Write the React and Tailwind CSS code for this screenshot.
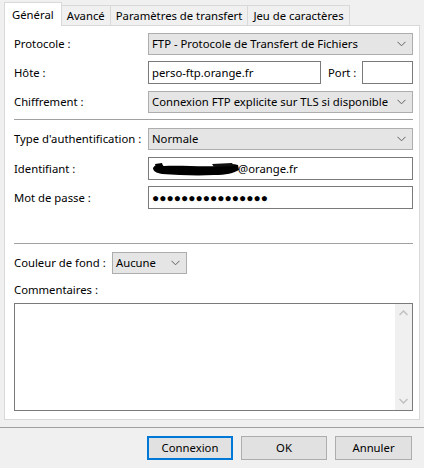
import React from 'react';

const font = { fontFamily: '"Noto Sans", "Open Sans", sans-serif' };

const Chevron = () => (
  <svg width="9" height="6" viewBox="0 0 9 6" className="shrink-0">
    <path d="M0.5 0.8 L4.5 4.8 L8.5 0.8" fill="none" stroke="#606060" strokeWidth="1" />
  </svg>
);

const Select = ({ value, className = '' }) => (
  <div className={`flex items-center justify-between bg-[#e5e5e5] border border-[#adadad] pl-[3px] pr-[6px] ${className}`}>
    <span className="text-black">{value}</span>
    <Chevron />
  </div>
);

const Input = ({ children, className = '' }) => (
  <div className={`flex items-center bg-white border border-[#7a7a7a] pl-[3px] ${className}`}>{children}</div>
);

const Row = ({ label, children, className = '' }) => (
  <div className={`flex items-center ${className}`}>
    <div className="w-[134px] shrink-0">{label}</div>
    <div className="flex-1 flex items-center">{children}</div>
  </div>
);

const tabs = ['Avancé', 'Paramètres de transfert', 'Jeu de caractères'];

export default function App() {
  return (
    <div className="w-[424px] h-[468px] bg-[#f0f0f0] text-[11.3px] text-black relative overflow-hidden leading-none whitespace-nowrap" style={font}>
      {/* tabs */}
      <div className="flex items-end pl-[4px] pt-[2px] h-[26px] relative z-10">
        <div className="h-[24px] px-[7px] flex items-center bg-white border border-b-0 border-[#d9d9d9]">Général</div>
        {tabs.map(t => (
          <div key={t} className="h-[20px] px-[5px] mb-[1px] flex items-center bg-[#f0f0f0] border border-b-0 border-l-0 border-[#d9d9d9]">{t}</div>
        ))}
      </div>

      {/* panel */}
      <div className="mx-[4px] -mt-[1px] h-[395px] bg-white border border-[#d9d9d9] pl-[9px] pr-[6px] flex flex-col">
        <Row label="Protocole :" className="mt-[7px]">
          <Select value="FTP - Protocole de Transfert de Fichiers" className="w-full h-[22px]" />
        </Row>
        <Row label="Hôte :" className="mt-[6px]">
          <Input className="w-[173px] h-[23px]">perso-ftp.orange.fr</Input>
          <span className="ml-[7px] w-[34px]">Port :</span>
          <Input className="w-[51px] h-[23px]" />
        </Row>
        <Row label="Chiffrement :" className="mt-[7px]">
          <Select value="Connexion FTP explicite sur TLS si disponible" className="w-full h-[22px]" />
        </Row>

        <div className="mt-[6px] h-px bg-[#a0a0a0]" />

        <Row label="Type d'authentification :" className="mt-[8px]">
          <Select value="Normale" className="w-full h-[22px]" />
        </Row>
        <Row label="Identifiant :" className="mt-[7px]">
          <Input className="w-full h-[23px] relative">
            <svg width="88" height="18" viewBox="0 0 88 18" className="shrink-0">
              <path d="M1 8 C3 4 8 4 12 6 C28 5 48 7 66 6 C74 4 80 3 86 5 L87 10 C82 13 74 15 62 15 C44 16 26 15 10 14 C4 13 1 11 1 8 Z" fill="#000" />
              <path d="M3 4 L10 3 L11 6 L4 7 Z" fill="#000" />
              <path d="M60 4 L80 3 L82 6 L62 7 Z" fill="#111" />
            </svg>
            <span className="-ml-[2px]">@orange.fr</span>
          </Input>
        </Row>
        <Row label="Mot de passe :" className="mt-[6px]">
          <Input className="w-full h-[23px]">
            <span className="text-[12px]">●●●●●●●●●●●●●●●●</span>
          </Input>
        </Row>

        <div className="mt-[34px] h-px bg-[#a0a0a0]" />

        <div className="flex items-center mt-[8px]">
          <span className="w-[98px]">Couleur de fond :</span>
          <Select value="Aucune" className="w-[75px] h-[22px]" />
        </div>
        <div className="mt-[10px]">Commentaires :</div>
        <div className="mt-[8px] h-[108px] border border-[#7a7a7a] bg-white flex justify-end">
          <div className="w-[17px] bg-[#f0f0f0] flex flex-col items-center justify-between py-[6px]">
            <svg width="9" height="6" viewBox="0 0 9 6"><path d="M0.5 5 L4.5 1 L8.5 5" fill="none" stroke="#c0c0c0" strokeWidth="1.5" /></svg>
            <svg width="9" height="6" viewBox="0 0 9 6"><path d="M0.5 1 L4.5 5 L8.5 1" fill="none" stroke="#c0c0c0" strokeWidth="1.5" /></svg>
          </div>
        </div>
      </div>

      <div className="mt-[7px] h-px bg-[#a0a0a0]" />

      {/* buttons */}
      <div className="flex justify-end gap-[8px] pr-[12px] mt-[8px]">
        <button className="w-[86px] h-[24px] bg-[#e1e1e1] border-2 border-[#0078d7] flex items-center justify-center">Connexion</button>
        <button className="w-[86px] h-[24px] bg-[#e1e1e1] border border-[#adadad] flex items-center justify-center">OK</button>
        <button className="w-[77px] h-[24px] bg-[#e1e1e1] border border-[#adadad] flex items-center justify-center">Annuler</button>
      </div>
    </div>
  );
}
